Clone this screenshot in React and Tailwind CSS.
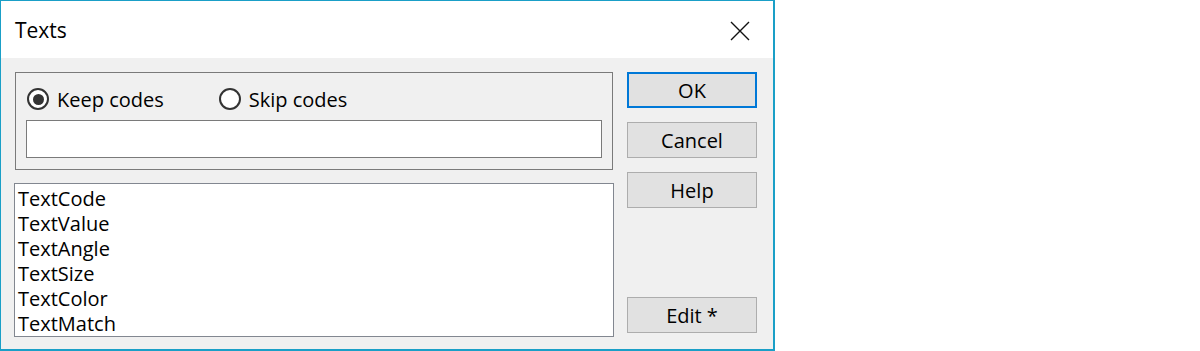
import React from 'react';

const items = ['TextCode', 'TextValue', 'TextAngle', 'TextSize', 'TextColor', 'TextMatch'];

const Radio = ({ checked, label }) => (
  <label className="flex items-center gap-[8px] cursor-default">
    <span className="w-[22px] h-[22px] rounded-full border-2 border-[#333333] bg-white flex items-center justify-center">
      {checked && <span className="w-[11px] h-[11px] rounded-full bg-[#333333]" />}
    </span>
    <span>{label}</span>
  </label>
);

const Button = ({ children, primary, className = '' }) => (
  <button
    className={`w-[130px] h-[36px] bg-[#e1e1e1] text-black flex items-center justify-center ${
      primary ? 'border-2 border-[#0078d7]' : 'border border-[#adadad]'
    } ${className}`}
  >
    {children}
  </button>
);

export default function App() {
  return (
    <div
      className="w-[775px] h-[351px] flex flex-col border-l border-t border-r-2 border-b-2 border-[#1a9fc7] bg-[#f0f0f0] text-black text-[20px] leading-[25px]"
      style={{ fontFamily: '"Segoe UI", "Open Sans", sans-serif' }}
    >
      {/* Title bar */}
      <div className="h-[57px] bg-white flex items-center justify-between pl-[14px] pr-[23px] pt-[2px]">
        <span className="text-[21px]">Texts</span>
        <svg width="20" height="20" viewBox="0 0 20 20">
          <path d="M1 1 L19 19 M19 1 L1 19" stroke="#111" strokeWidth="1.4" fill="none" />
        </svg>
      </div>

      {/* Body */}
      <div className="flex-1 flex pl-[13px] pr-[16px] pt-[14px]">
        <div className="w-[600px] flex flex-col pb-[12px]">
          <div className="ml-[1px] w-[598px] h-[98px] border border-[#7a7a7a] px-[10px] pt-[14px]">
            <div className="flex items-center gap-[55px] h-[24px] ml-[1px]">
              <Radio checked label="Keep codes" />
              <Radio label="Skip codes" />
            </div>
            <div className="mt-[9px] h-[38px] border border-[#7a7a7a] bg-white" />
          </div>
          <div className="mt-[13px] flex-1 border border-[#828790] bg-white pl-[3px] pt-[2px]">
            {items.map((t) => (
              <div key={t} className="h-[25px]">{t}</div>
            ))}
          </div>
        </div>

        <div className="ml-[13px] flex flex-col gap-[14px] pb-[16px]">
          <Button primary>OK</Button>
          <Button>Cancel</Button>
          <Button>Help</Button>
          <Button className="mt-auto">Edit *</Button>
        </div>
      </div>
    </div>
  );
}
